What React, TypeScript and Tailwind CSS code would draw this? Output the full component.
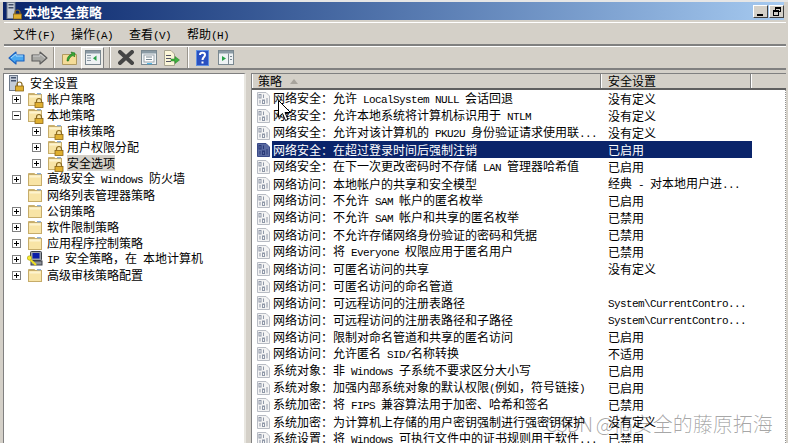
import React from "react";

const FONT = "font-['Noto_Sans_CJK_SC','Noto_Sans_CJK_JP',sans-serif]";

function T({ s }: { s: string }) {
  const parts = s.split(/([\x20-\x7e]+)/).filter(Boolean);
  return (
    <>
      {parts.map((p, i) =>
        /^[\x20-\x7e]+$/.test(p) ? (
          <span key={i} className="font-['Liberation_Mono',monospace] text-[11px] tracking-[-0.6px] whitespace-pre">
            {p}
          </span>
        ) : (
          <span key={i}>{p}</span>
        )
      )}
    </>
  );
}

function Lock({ x = 8, y = 8 }: { x?: number; y?: number }) {
  return (
    <g transform={`translate(${x} ${y})`}>
      <path d="M2 4V2.5a2.5 2.5 0 0 1 5 0V4" fill="none" stroke="#8a6a20" strokeWidth="1.2" />
      <rect x="0.5" y="4" width="8" height="5" fill="#e0b030" stroke="#8a6414" strokeWidth="0.8" />
    </g>
  );
}

function Folder({ lock = false }: { lock?: boolean }) {
  return (
    <svg width="17" height="17" viewBox="0 0 17 17" className="block shrink-0">
      <path d="M1.5 3.5V2.5h6l1 1h6v1" fill="#f4e2a8" stroke="#c9b070" />
      <rect x="1.5" y="3.5" width="13" height="11" fill="#f8e4a6" stroke="#c6ac6a" />
      <rect x="2.5" y="4.5" width="11" height="2" fill="#fdf3cf" />
      <rect x="10" y="2" width="4" height="1.4" fill="#8fb0d8" />
      {lock && <Lock x={7.5} y={7.5} />}
    </svg>
  );
}

function ServerLock() {
  return (
    <svg width="16" height="18" viewBox="0 0 16 18" className="block shrink-0">
      <rect x="0.5" y="1.5" width="8" height="15" fill="#c4ccd8" stroke="#6f7a8a" />
      <rect x="2" y="3" width="5" height="1.5" fill="#44506a" />
      <rect x="2" y="6" width="5" height="1.5" fill="#44506a" />
      <Lock x={6} y={8} />
    </svg>
  );
}

function IpIcon() {
  return (
    <svg width="16" height="16" viewBox="0 0 16 16" className="block shrink-0">
      <rect x="3.5" y="0.5" width="11" height="9" rx="1" fill="#9aa0a8" stroke="#3c4048" />
      <rect x="5.5" y="2" width="7" height="5.5" fill="#0a1ea8" />
      <rect x="4" y="10" width="11" height="4" fill="#8c9098" stroke="#3c4048" />
      <path d="M1 6.5 9 14" stroke="#f0e020" strokeWidth="2" />
      <circle cx="2.5" cy="7" r="2.2" fill="#f6ea30" stroke="#a89a10" strokeWidth="0.6" />
    </svg>
  );
}

function Policy({ selected = false }: { selected?: boolean }) {
  const bg = selected ? "#5a6aa0" : "#f4f4f4";
  const fg = selected ? "#2a3a78" : "#8f98a8";
  return (
    <svg width="13" height="14" viewBox="0 0 13 14" className="block shrink-0">
      <path d="M0.5 0.5H9L12.5 4V13.5H0.5Z" fill={bg} stroke={selected ? "#3a4a88" : "#b8bcc4"} />
      <rect x="2" y="2.5" width="2" height="3.5" fill="none" stroke={fg} />
      <rect x="6" y="2.5" width="1" height="3.5" fill={fg} />
      <rect x="2.5" y="8" width="1" height="3.5" fill={fg} />
      <rect x="5.5" y="8" width="2" height="3.5" fill="none" stroke={fg} />
      <rect x="9.5" y="6" width="1" height="5.5" fill={fg} />
    </svg>
  );
}

function Expander({ open = false }: { open?: boolean }) {
  return (
    <svg width="9" height="9" viewBox="0 0 9 9" className="block shrink-0">
      <rect x="0.5" y="0.5" width="8" height="8" fill="#fff" stroke="#808080" />
      <path d="M2 4.5H7" stroke="#000" />
      {!open && <path d="M4.5 2V7" stroke="#000" />}
    </svg>
  );
}

type Tree = { label: string; level: 1 | 2; exp?: "plus" | "minus"; icon: "lock" | "folder" | "ip"; sel?: boolean };

const tree: Tree[] = [
  { label: "帐户策略", level: 1, exp: "plus", icon: "lock" },
  { label: "本地策略", level: 1, exp: "minus", icon: "lock" },
  { label: "审核策略", level: 2, exp: "plus", icon: "lock" },
  { label: "用户权限分配", level: 2, exp: "plus", icon: "lock" },
  { label: "安全选项", level: 2, exp: "plus", icon: "lock", sel: true },
  { label: "高级安全 Windows 防火墙", level: 1, exp: "plus", icon: "folder" },
  { label: "网络列表管理器策略", level: 1, icon: "folder" },
  { label: "公钥策略", level: 1, exp: "plus", icon: "folder" },
  { label: "软件限制策略", level: 1, exp: "plus", icon: "folder" },
  { label: "应用程序控制策略", level: 1, exp: "plus", icon: "folder" },
  { label: "IP 安全策略\uFF0C在 本地计算机", level: 1, exp: "plus", icon: "ip" },
  { label: "高级审核策略配置", level: 1, exp: "plus", icon: "folder" },
];

const rows: [string, string][] = [
  ["网络安全\uFF1A允许 LocalSystem NULL 会话回退", "没有定义"],
  ["网络安全\uFF1A允许本地系统将计算机标识用于 NTLM", "没有定义"],
  ["网络安全\uFF1A允许对该计算机的 PKU2U 身份验证请求使用联...", "没有定义"],
  ["网络安全\uFF1A在超过登录时间后强制注销", "已启用"],
  ["网络安全\uFF1A在下一次更改密码时不存储 LAN 管理器哈希值", "已启用"],
  ["网络访问\uFF1A本地帐户的共享和安全模型", "经典 - 对本地用户进..."],
  ["网络访问\uFF1A不允许 SAM 帐户的匿名枚举", "已启用"],
  ["网络访问\uFF1A不允许 SAM 帐户和共享的匿名枚举", "已禁用"],
  ["网络访问\uFF1A不允许存储网络身份验证的密码和凭据", "已禁用"],
  ["网络访问\uFF1A将 Everyone 权限应用于匿名用户", "已禁用"],
  ["网络访问\uFF1A可匿名访问的共享", "没有定义"],
  ["网络访问\uFF1A可匿名访问的命名管道", ""],
  ["网络访问\uFF1A可远程访问的注册表路径", "System\\CurrentContro..."],
  ["网络访问\uFF1A可远程访问的注册表路径和子路径", "System\\CurrentContro..."],
  ["网络访问\uFF1A限制对命名管道和共享的匿名访问", "已启用"],
  ["网络访问\uFF1A允许匿名 SID/名称转换", "不适用"],
  ["系统对象\uFF1A非 Windows 子系统不要求区分大小写", "已启用"],
  ["系统对象\uFF1A加强内部系统对象的默认权限(例如\uFF0C符号链接)", "已启用"],
  ["系统加密\uFF1A将 FIPS 兼容算法用于加密\u3001哈希和签名", "已禁用"],
  ["系统加密\uFF1A为计算机上存储的用户密钥强制进行强密钥保护", "没有定义"],
  ["系统设置\uFF1A将 Windows 可执行文件中的证书规则用于软件...", "已禁用"],
];

function Btn({ children, active = false }: { children: React.ReactNode; active?: boolean }) {
  return (
    <div
      className={
        "w-[23px] h-[22px] flex items-center justify-center shrink-0 " +
        (active ? "bg-[#ecebe6] border border-t-white border-l-white border-b-[#808080] border-r-[#808080]" : "")
      }
    >
      {children}
    </div>
  );
}

function Sep({ cls }: { cls: string }) {
  return <div className={"h-[21px] w-[2px] shrink-0 bg-[#9a968e] border-r border-white " + cls} />;
}

function Arrow({ flip = false, gray = false }: { flip?: boolean; gray?: boolean }) {
  const fill = gray ? "#a8a8a4" : "#4aa8f0";
  const stroke = gray ? "#5c5c5c" : "#1860c0";
  return (
    <svg width="17" height="14" viewBox="0 0 17 14" className={flip ? "-scale-x-100" : ""}>
      <path d="M1 7 8 1V4H16V10H8V13Z" fill={fill} stroke={stroke} strokeWidth="1.1" strokeLinejoin="round" />
      <path d="M3 7 8 3V5H15" fill="none" stroke={gray ? "#d0d0d0" : "#a8dcff"} />
    </svg>
  );
}

function Win({ children }: { children?: React.ReactNode }) {
  return (
    <svg width="16" height="15" viewBox="0 0 16 15">
      <rect x="0.5" y="0.5" width="15" height="14" fill="#eef2f4" stroke="#7a8890" />
      <rect x="1" y="1" width="14" height="2.5" fill="#8a9aa4" />
      {children}
    </svg>
  );
}

export default function App() {
  return (
    <div className={"relative w-[788px] h-[443px] overflow-hidden bg-[#d4d0c8] text-black text-[12px] leading-none " + FONT}>
      {/* top edge */}
      <div className="h-[2px] bg-[#e6e6e6]" />
      {/* title bar */}
      <div className="ml-[3px] mr-[4px] h-[18px] flex items-center bg-gradient-to-r from-[#0a246a] to-[#a6caf0]">
        <svg width="17" height="18" viewBox="0 0 16 18" className="block shrink-0 ml-[3px]">
          <rect x="0.5" y="0.5" width="8" height="16" fill="#c4ccd8" stroke="#6f7a8a" />
          <rect x="2" y="2" width="5" height="1.5" fill="#44506a" />
          <rect x="2" y="5" width="5" height="1.5" fill="#44506a" />
          <Lock x={6.5} y={8} />
        </svg>
        <span className="ml-[1px] text-white font-bold text-[13px]">本地安全策略</span>
        <div className="ml-auto flex items-center gap-[1px] h-full">
          <div className="w-[15px] h-[13px] bg-[#d4d0c8] border border-t-white border-l-white border-b-[#404040] border-r-[#404040] relative">
            <div className="absolute left-[3px] bottom-[1px] w-[6px] h-[2px] bg-black" />
          </div>
          <div className="w-[15px] h-[13px] bg-[#d4d0c8] border border-t-white border-l-white border-b-[#404040] border-r-[#404040] relative">
            <div className="absolute left-[5px] top-[1px] w-[6px] h-[5px] border border-t-2 border-black" />
            <div className="absolute left-[3px] top-[4px] w-[6px] h-[6px] border border-t-2 border-black bg-[#d4d0c8]" />
          </div>
        </div>
      </div>
      {/* menu */}
      <div className="mt-[2px] ml-[4px] mr-[2px] h-[24px] flex items-center border-t border-white border-b-2 border-b-[#808080] pl-[1px] pt-[2px]">
        {["文件(F)", "操作(A)", "查看(V)", "帮助(H)"].map((m) => (
          <div key={m} className="w-[58px] pl-[8px] whitespace-nowrap">
            <T s={m} />
          </div>
        ))}
      </div>
      {/* toolbar */}
      <div className="ml-[4px] mr-[2px] h-[24px] flex items-center border-t border-white border-b-2 border-b-[#808080] pl-[1px]">
        <Btn><Arrow /></Btn>
        <Btn><Arrow flip gray /></Btn>
        <Sep cls="mx-[2px]" />
        <div className="w-[1px] shrink-0" />
        <Btn>
          <svg width="15" height="15" viewBox="0 0 15 15">
            <path d="M0.5 4.5H14.5V14.5H0.5Z" fill="#f4dc98" stroke="#b09a60" />
            <path d="M5 11C5 7 7 5 10 4L9 2 13 3 12.5 7 11 5.5C9 6.5 7 8 6.5 11Z" fill="#38a838" stroke="#187018" strokeWidth="0.6" />
          </svg>
        </Btn>
        <Btn active>
          <Win>
            <rect x="2" y="5" width="4" height="1" fill="#8a9aa4" />
            <rect x="2" y="7.5" width="4" height="1" fill="#8a9aa4" />
            <rect x="2" y="10" width="4" height="1" fill="#8a9aa4" />
            <path d="M11.5 5.5V11L8 8.2Z" fill="#28a048" />
          </Win>
        </Btn>
        <Sep cls="ml-[5px] mr-[2px]" />
        <div className="w-[1px] shrink-0" />
        <Btn>
          <svg width="16" height="15" viewBox="0 0 16 15">
            <path d="M2 2 14 13M14 2 2 13" stroke="#454545" strokeWidth="4" strokeLinecap="round" />
          </svg>
        </Btn>
        <Btn>
          <Win>
            <rect x="3" y="5" width="10" height="7" fill="#fff" stroke="#9aa4ac" />
            <rect x="5" y="6.5" width="6" height="1" fill="#7a8a94" />
            <rect x="5" y="9" width="6" height="1" fill="#7a8a94" />
            <rect x="6" y="13.2" width="5" height="1" fill="#30a8e0" />
          </Win>
        </Btn>
        <Btn>
          <svg width="17" height="16" viewBox="0 0 17 16">
            <path d="M1.5 0.5H8L11.5 4V15.5H1.5Z" fill="#fbf6d8" stroke="#a8a490" />
            <rect x="3" y="5" width="5" height="1" fill="#556" />
            <rect x="3" y="8" width="5" height="1" fill="#556" />
            <rect x="3" y="11" width="5" height="1" fill="#556" />
            <path d="M8 9H12V6.5L16.5 10 12 13.5V11H8Z" fill="#40b040" stroke="#208020" strokeWidth="0.5" />
          </svg>
        </Btn>
        <Sep cls="ml-[4px] mr-[2px]" />
        <Btn>
          <svg width="13" height="16" viewBox="0 0 13 16">
            <rect x="0" y="0" width="13" height="16" fill="#2a50c0" />
            <rect x="0.5" y="0.5" width="12" height="15" fill="none" stroke="#6090e0" />
            <path d="M4 5C4 2 9 2 9 5C9 7 6.5 7 6.5 10" fill="none" stroke="#fff" strokeWidth="2" />
            <rect x="5.5" y="11.5" width="2" height="2" fill="#fff" />
          </svg>
        </Btn>
        <Btn>
          <Win>
            <rect x="10" y="3.5" width="1" height="11" fill="#7a8890" />
            <path d="M4 6V11L8 8.5Z" fill="#28a048" />
            <rect x="12" y="6" width="2" height="1" fill="#7a8a94" />
            <rect x="12" y="9" width="2" height="1" fill="#7a8a94" />
          </Win>
        </Btn>
      </div>
      {/* panes */}
      <div className="mt-[3px] ml-[3px] flex h-[370px]">
        <div className="w-[243px] shrink-0 bg-white border-l border-t border-[#808080] border-r-2 border-r-[#e8e6e0] overflow-hidden pt-[1px]">
          <div className="h-[16px] flex items-center pl-[5px] whitespace-nowrap">
            <ServerLock />
            <span className="ml-[5px]">安全设置</span>
          </div>
          {tree.map((t) => (
            <div key={t.label} className={"h-[16px] flex items-center whitespace-nowrap " + (t.level === 1 ? "pl-[8px]" : "pl-[28px]")}>
              <div className="w-[9px] shrink-0">{t.exp && <Expander open={t.exp === "minus"} />}</div>
              <div className="w-[17px] ml-[6px] shrink-0">
                {t.icon === "ip" ? <IpIcon /> : <Folder lock={t.icon === "lock"} />}
              </div>
              <span className={"ml-[3px] py-[2px] " + (t.sel ? "bg-[#d4d0c8]" : "")}>
                <T s={t.label} />
              </span>
            </div>
          ))}
        </div>
        <div className="w-[5px] shrink-0" />
        <div className="w-[535px] shrink-0 bg-white border-l border-t border-[#808080] overflow-hidden">
          <div className="h-[16px] flex bg-[#d4d0c8] border-b-2 border-b-[#606060]">
            <div className="w-[349px] shrink-0 flex items-center pl-[5px] border-l border-white border-r border-r-[#808080]">
              策略
              <svg width="8" height="5" viewBox="0 0 8 5" className="ml-[8px]">
                <path d="M0 5 4 0 8 5Z" fill="#a8a49c" />
              </svg>
            </div>
            <div className="w-[150px] shrink-0 flex items-center pl-[6px] border-l border-white border-r border-r-[#808080]">
              安全设置
            </div>
            <div className="flex-1 border-l border-white" />
          </div>
          {rows.map(([a, b], i) => (
            <div key={a} className="h-[17px] flex items-center pl-[5px] whitespace-nowrap">
              <Policy selected={i === 3} />
              <div className={"ml-[2px] w-[480px] h-[17px] flex items-center " + (i === 3 ? "bg-[#0a246a] text-white" : "")}>
                <div className="w-[336px] pl-[1px] shrink-0"><T s={a} /></div>
                <div><T s={b} /></div>
              </div>
            </div>
          ))}
        </div>
      </div>
      {/* pointer */}
      <svg width="14" height="22" viewBox="0 0 14 22" className="absolute left-[278px] top-[100px]">
        <path d="M0.5 0.5V17L4.5 13.5 7.5 20.5 10 19.5 7 12.5H12.5Z" fill="#fff" stroke="#000" />
      </svg>
      {/* right edge */}
      <div className="absolute right-[2px] top-[90px] bottom-0 w-0 border-r border-dotted border-[#909090]" />
      {/* watermark */}
      <div className="absolute left-[545px] top-[412px] text-[20px] leading-[24px] font-light text-black/35 whitespace-nowrap font-['Noto_Sans_CJK_SC',sans-serif]">
        <span className="tracking-[-1px]">CSDN @</span>搞安全的藤原拓海
      </div>
    </div>
  );
}
